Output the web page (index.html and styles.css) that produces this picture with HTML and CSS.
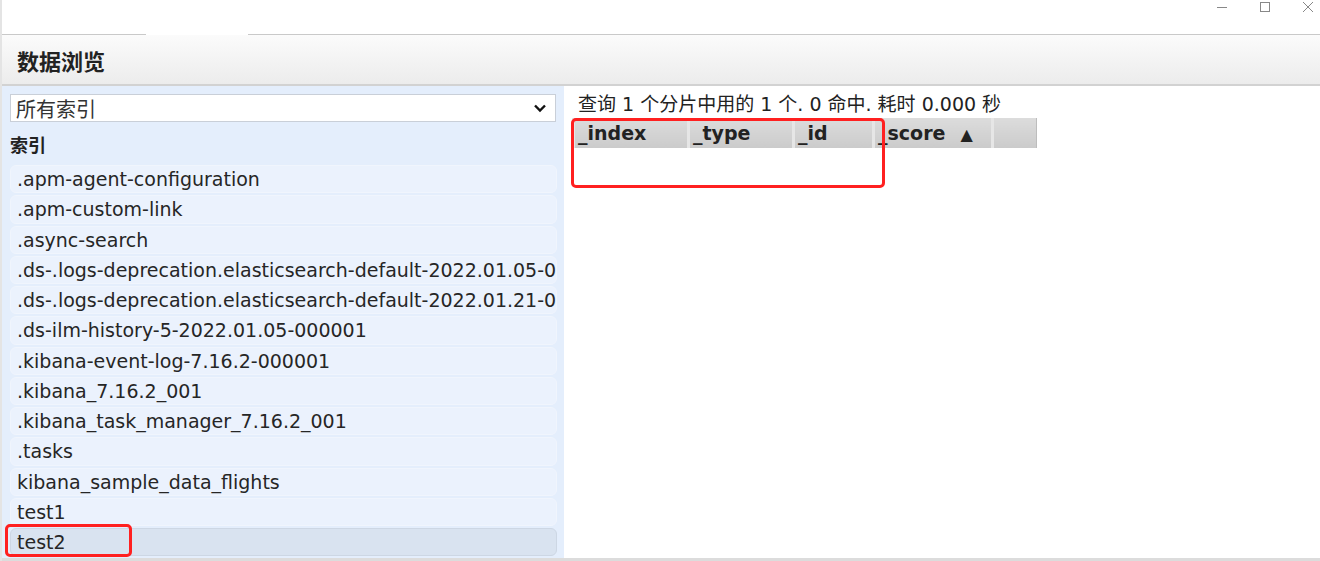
FILE: index.html
```html
<!DOCTYPE html>
<html lang="zh-CN">
<head>
  <meta charset="UTF-8">
  <title>数据浏览</title>
  <link rel="stylesheet" href="styles.css">
</head>
<body>
  <div class="window">
    <div class="titlebar">
      <span class="tab"></span>
      <div class="controls">
        <svg width="12" height="12" viewBox="0 0 12 12"><path d="M1 6.5h10" stroke="#888" stroke-width="1"/></svg>
        <svg width="12" height="12" viewBox="0 0 12 12"><rect x="1.5" y="1.5" width="9" height="9" fill="none" stroke="#888" stroke-width="1"/></svg>
        <svg width="12" height="12" viewBox="0 0 12 12"><path d="M1 1l10 10M11 1L1 11" stroke="#888" stroke-width="1"/></svg>
      </div>
    </div>

    <div class="header">数据浏览</div>

    <div class="main">
      <aside class="sidebar">
        <div class="select">
          <span>所有索引</span>
          <svg width="14" height="10" viewBox="0 0 14 10"><path d="M2 2.5l5 5 5-5" fill="none" stroke="#111" stroke-width="2.4"/></svg>
        </div>
        <h3 class="side-title">索引</h3>
        <ul class="index-list">
          <li>.apm-agent-configuration</li>
          <li>.apm-custom-link</li>
          <li>.async-search</li>
          <li>.ds-.logs-deprecation.elasticsearch-default-2022.01.05-000001</li>
          <li>.ds-.logs-deprecation.elasticsearch-default-2022.01.21-000001</li>
          <li>.ds-ilm-history-5-2022.01.05-000001</li>
          <li>.kibana-event-log-7.16.2-000001</li>
          <li>.kibana_7.16.2_001</li>
          <li>.kibana_task_manager_7.16.2_001</li>
          <li>.tasks</li>
          <li>kibana_sample_data_flights</li>
          <li>test1</li>
          <li class="selected">test2</li>
        </ul>
        <div class="mark mark-test2"></div>
      </aside>

      <section class="content">
        <p class="summary">查询 1 个分片中用的 1 个. 0 命中. 耗时 0.000 秒</p>
        <table class="results">
          <thead>
            <tr>
              <th class="c-index">_index</th>
              <th class="c-type">_type</th>
              <th class="c-id">_id</th>
              <th class="c-score">_score<span class="sort">&#9650;</span></th>
              <th class="c-empty"></th>
            </tr>
          </thead>
        </table>
        <div class="mark mark-head"></div>
      </section>
    </div>
  </div>
</body>
</html>
```

FILE: styles.css
```css
* { margin:0; padding:0; box-sizing:border-box; }
body { font-family:"DejaVu Sans", "Noto Sans CJK SC", sans-serif; color:#222; background:#fff; width:1320px; height:561px; overflow:hidden; }
.window { height:561px; border-left:2px solid #e4e4e4; display:flex; flex-direction:column; }

/* Заголовок окна */
.titlebar { height:35px; border-bottom:1px solid #c9c9c9; position:relative; }
.titlebar .tab { position:absolute; left:144px; bottom:-1px; width:102px; height:2px; background:#fff; }
.controls { position:absolute; right:6px; top:1px; display:flex; gap:31px; }
.controls svg { display:block; }

.header {
  height:51px; padding-left:15px; display:flex; align-items:center;
  font-family:"Noto Sans CJK SC", sans-serif; font-weight:bold; font-size:22px; color:#222;
  background:linear-gradient(#fbfbfb, #ececec); border-bottom:2px solid #d2d2d2;
}

.main { flex:1; display:flex; min-height:0; border-bottom:3px solid #dcdcdc; }

/* Боковая панель */
.sidebar { width:562px; background:#e4eefc; padding:8px 8px 0 8px; position:relative; overflow:hidden; }
.select {
  height:28px; background:#fff; border:1px solid #c9cfd8;
  display:flex; align-items:center; justify-content:space-between; padding:0 8px 0 5px;
  font-family:"Noto Sans CJK SC", sans-serif; font-size:20px; color:#333;
}
.side-title { font-family:"Noto Sans CJK SC", sans-serif; font-weight:bold; font-size:18px; color:#222; margin:10px 0 9px 0; line-height:24px; }
.index-list { list-style:none; display:flex; flex-direction:column; gap:2px; }
.index-list li {
  height:28.25px; line-height:27px; padding-left:6px; white-space:nowrap; overflow:hidden;
  font-size:19px; color:#262626; background:#ebf2fd; border:1px solid #f0f5fd; border-radius:6px;
  margin-right:-1px;
}
.index-list li.selected { background:#d9e3f0; border-color:#cdd7e4; }

/* Результаты */
.content { flex:1; position:relative; padding:6px 0 0 8px; }
.summary { font-size:19px; color:#222; padding-left:6px; line-height:24px; }
.results { border-collapse:collapse; margin-top:2px; }
.results th {
  height:30px; text-align:left; padding:0 3px; font-size:19px; font-weight:bold; color:#222;
  background:linear-gradient(#dcdcdc, #cbcbcb); border-left:3px solid #e6e6e6; border-right:1px solid #bdbdbd;
}
.results .sort { font-size:16px; margin-left:15px; }
.c-index { width:115px; }
.c-type { width:105px; }
.c-id { width:80px; }
.c-score { width:119px; }
.c-empty { width:44px; }

/* Красные пометки */
.mark { position:absolute; border:3px solid #ff2020; border-radius:5px; }
.mark-head { left:7px; top:32px; width:314px; height:70px; }
.mark-test2 { left:3px; top:438px; width:127px; height:33px; }
```
